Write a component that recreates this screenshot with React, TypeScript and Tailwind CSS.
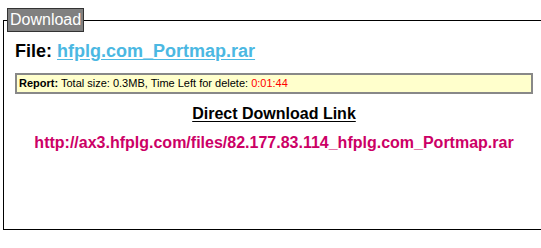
export default function App() {
  return (
    <div className="w-[541px] h-[248px] overflow-hidden bg-white font-['Liberation_Sans',Arial,sans-serif]">
      <fieldset className="ml-[3px] mt-[8px] w-[542px] h-[222px] border border-black px-[11px] pt-0 pb-0">
        <legend className="-ml-[8px] px-[2px] h-[24px] leading-[22px] bg-[#808080] text-white border border-[#333] text-[16px]">
          Download
        </legend>
        <div className="mt-[8px] text-[18px] font-bold leading-[22px] text-black">
          File:{" "}
          <a href="#" className="text-[#4bb8e2] underline underline-offset-[2px]">
            hfplg.com_Portmap.rar
          </a>
        </div>
        <div className="mt-[11px] h-[21px] border-2 border-[#888] bg-[#ffffcc] px-[2px] text-[11px] leading-[17px] text-black">
          <b>Report:</b> Total size: 0.3MB, Time Left for delete:{" "}
          <span className="text-[#ff0000]">0:01:44</span>
        </div>
        <div className="mt-[10px] text-center text-[16px] font-bold leading-[20px] underline underline-offset-[2px] text-black">
          Direct Download Link
        </div>
        <div className="mt-[8px] text-center text-[16px] font-bold leading-[22px] text-[#cc0066]">
          http://ax3.hfplg.com/files/82.177.83.114_hfplg.com_Portmap.rar
        </div>
      </fieldset>
    </div>
  );
}
